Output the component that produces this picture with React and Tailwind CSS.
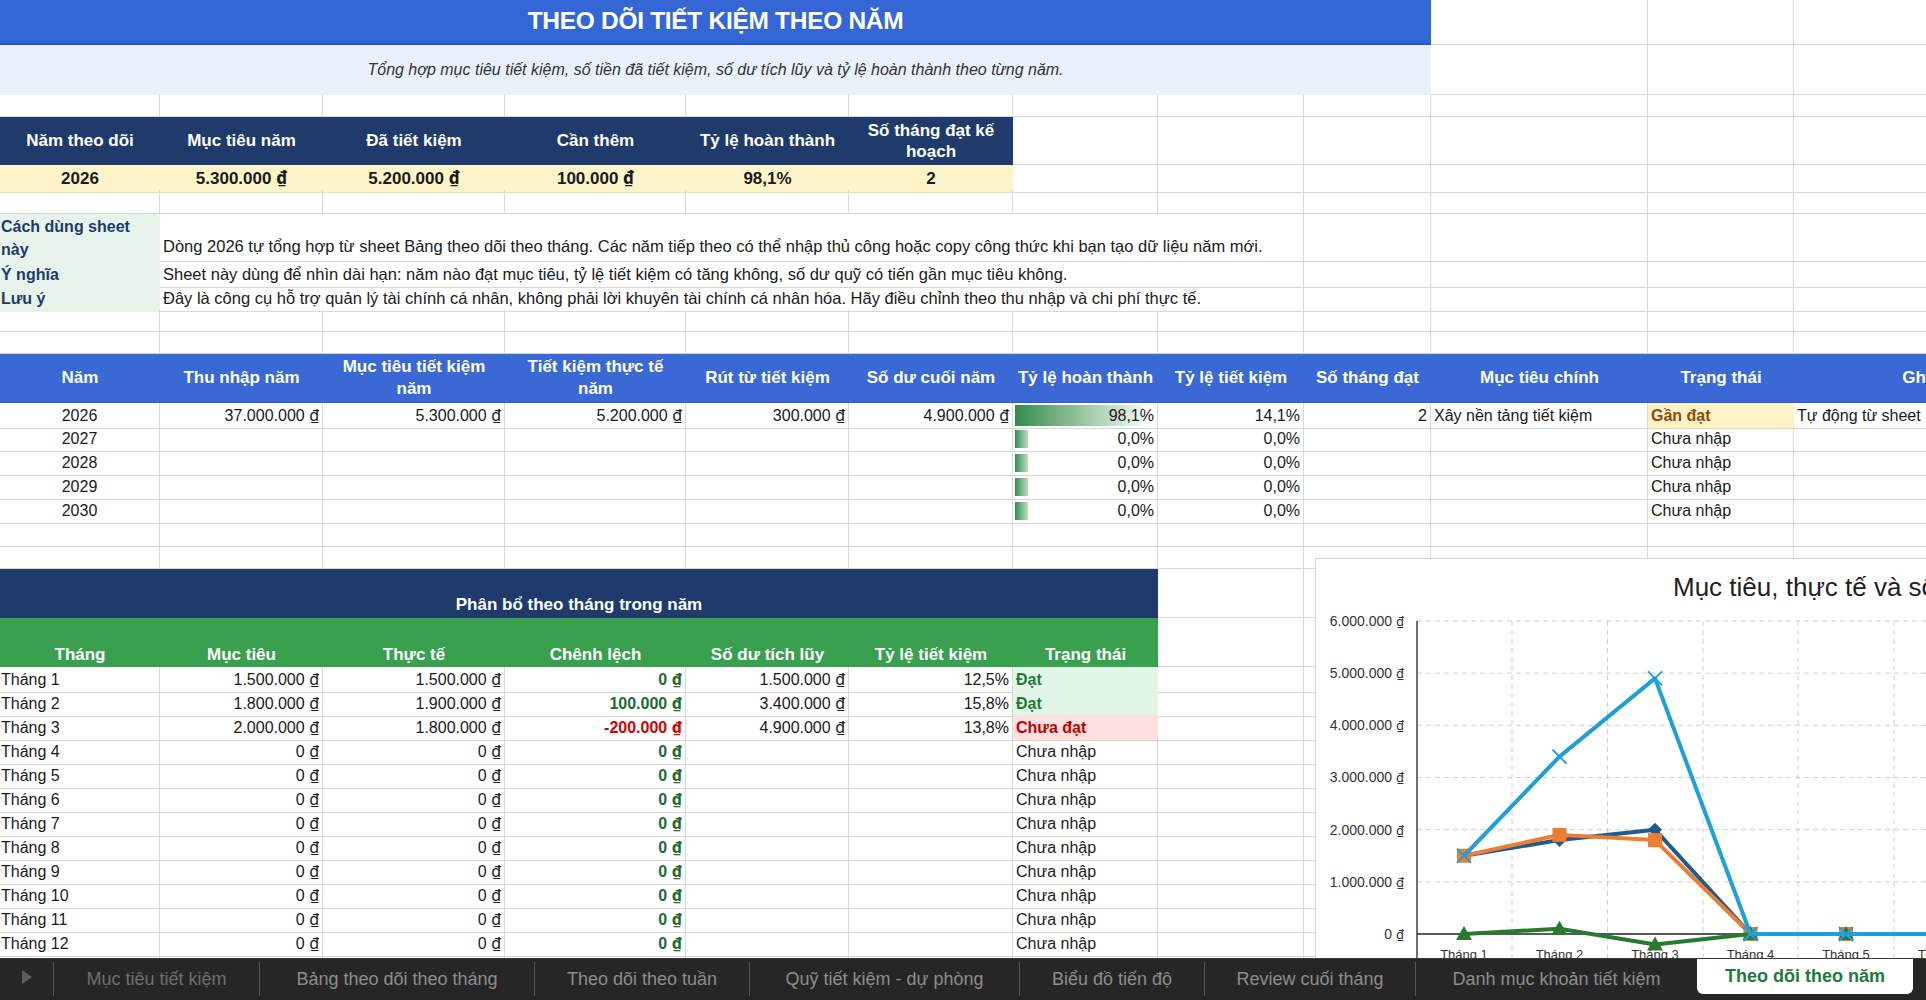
import React from "react";

const COLS =
  "grid grid-cols-[160px_163px_182px_181px_163px_164px_145px_146px_127px_217px_146px_280px]";
const LINE = "border-r border-b border-[#d9d9d9]";

function Cell({ span = "", cls = "", line = true, children }) {
  return (
    <div className={`${span} ${line ? LINE : ""} ${cls} relative flex min-w-0 whitespace-nowrap`}>
      {children}
    </div>
  );
}

function Row({ h, children }) {
  return <div className={`${COLS} ${h}`}>{children}</div>;
}

const blanks = (n) => Array.from({ length: n }).map((_, i) => <Cell key={"b" + i} />);

// the dong sign is tiny in Liberation Sans, so it gets its own font
const fmt = (s) => {
  if (!s || !s.includes("₫")) return s;
  const [n] = s.split(" ₫");
  return (
    <span>
      {n} <span className="font-['Noto_Sans',sans-serif]">₫</span>
    </span>
  );
};

const summaryHead = ["Năm theo dõi", "Mục tiêu năm", "Đã tiết kiệm", "Cần thêm", "Tỷ lệ hoàn thành"];
const summaryVals = ["2026", "5.300.000 ₫", "5.200.000 ₫", "100.000 ₫", "98,1%", "2"];

const notes = [
  ["Ý nghĩa", "Sheet này dùng để nhìn dài hạn: năm nào đạt mục tiêu, tỷ lệ tiết kiệm có tăng không, số dư quỹ có tiến gần mục tiêu không."],
  ["Lưu ý", "Đây là công cụ hỗ trợ quản lý tài chính cá nhân, không phải lời khuyên tài chính cá nhân hóa. Hãy điều chỉnh theo thu nhập và chi phí thực tế."],
];

const months = [
  ["Tháng 1", "1.500.000 ₫", "1.500.000 ₫", "0 ₫", "1.500.000 ₫", "12,5%", "Đạt"],
  ["Tháng 2", "1.800.000 ₫", "1.900.000 ₫", "100.000 ₫", "3.400.000 ₫", "15,8%", "Đạt"],
  ["Tháng 3", "2.000.000 ₫", "1.800.000 ₫", "-200.000 ₫", "4.900.000 ₫", "13,8%", "Chưa đạt"],
  ...[4, 5, 6, 7, 8, 9, 10, 11, 12].map((m) => ["Tháng " + m, "0 ₫", "0 ₫", "0 ₫", "", "", "Chưa nhập"]),
];

const years = [2027, 2028, 2029, 2030];

const tabs = [
  ["Mục tiêu tiết kiệm", "w-[206px]", "text-[#6f6f6f]"],
  ["Bảng theo dõi theo tháng", "w-[275px]", "text-[#8d8d8d]"],
  ["Theo dõi theo tuần", "w-[215px]", "text-[#8d8d8d]"],
  ["Quỹ tiết kiệm - dự phòng", "w-[270px]", "text-[#8d8d8d]"],
  ["Biểu đồ tiến độ", "w-[185px]", "text-[#8d8d8d]"],
  ["Review cuối tháng", "w-[211px]", "text-[#8d8d8d]"],
  ["Danh mục khoản tiết kiệm", "w-[282px]", "text-[#8d8d8d]"],
];

// chart geometry, relative to the chart box
const toY = (v) => 375 - v * 52.17;
const xs = [148, 243.5, 339, 434.5, 530, 625.5, 721];
const seriesData = {
  target: [1.5, 1.8, 2.0, 0, 0, 0, 0],
  actual: [1.5, 1.9, 1.8, 0, 0, 0, 0],
  diff: [0, 0.1, -0.2, 0, 0, 0, 0],
  balance: [1.5, 3.4, 4.9, 0, 0, 0, 0],
};
const pts = (arr) => arr.map((v, i) => `${xs[i]},${toY(v)}`).join(" ");

function Chart() {
  return (
    <div className="absolute left-[1315px] top-[558px] w-[700px] h-[460px] bg-white border border-[#d6d6d6]">
      <svg width="700" height="460" className="block">
        <text x="357" y="37" fontSize="26" fill="#1f1f1f" fontFamily="Liberation Sans, Arial, sans-serif">
          Mục tiêu, thực tế và số dư tích lũy
        </text>
        {[1, 2, 3, 4, 5, 6].map((t) => (
          <line key={"h" + t} x1="101" x2="700" y1={toY(t)} y2={toY(t)} stroke="#cfcfcf" strokeDasharray="5 4" />
        ))}
        {[196, 291.5, 387, 482, 578, 673].map((x) => (
          <line key={"v" + x} x1={x} x2={x} y1={toY(6)} y2="410" stroke="#cfcfcf" strokeDasharray="5 4" />
        ))}
        <line x1="101" x2="101" y1={toY(6)} y2="410" stroke="#222" strokeWidth="1.3" />
        <line x1="101" x2="700" y1={toY(0)} y2={toY(0)} stroke="#222" strokeWidth="1.3" />
        {[0, 1, 2, 3, 4, 5, 6].map((t) => (
          <text
            key={"yl" + t}
            x="88"
            y={toY(t) + 5}
            textAnchor="end"
            fontSize="14"
            fill="#333"
            fontFamily="Liberation Sans, Arial, sans-serif"
          >
            {t === 0 ? "0 " : `${t}.000.000 `}
            <tspan fontFamily="Noto Sans, sans-serif" fontSize="13">₫</tspan>
          </text>
        ))}
        {xs.map((x, i) => (
          <text
            key={"xl" + i}
            x={x}
            y="400"
            textAnchor="middle"
            fontSize="13"
            fill="#333"
            fontFamily="Liberation Sans, Arial, sans-serif"
          >
            {"Tháng " + (i + 1)}
          </text>
        ))}

        {/* Mục tiêu */}
        <polyline points={pts(seriesData.target)} fill="none" stroke="#1f5c8c" strokeWidth="4" strokeLinejoin="round" />
        {seriesData.target.map((v, i) => {
          const x = xs[i];
          const y = toY(v);
          return <path key={"d" + i} d={`M${x} ${y - 7} L${x + 7} ${y} L${x} ${y + 7} L${x - 7} ${y} Z`} fill="#1f5c8c" />;
        })}

        {/* Thực tế */}
        <polyline points={pts(seriesData.actual)} fill="none" stroke="#ed7d31" strokeWidth="4" strokeLinejoin="round" />
        {seriesData.actual.map((v, i) => (
          <rect key={"s" + i} x={xs[i] - 7} y={toY(v) - 7} width="14" height="14" fill="#ed7d31" />
        ))}

        {/* Chênh lệch */}
        <polyline points={pts(seriesData.diff)} fill="none" stroke="#2a7a2e" strokeWidth="4" strokeLinejoin="round" />
        {seriesData.diff.map((v, i) => {
          const x = xs[i];
          const y = toY(v);
          return <path key={"t" + i} d={`M${x} ${y - 8} L${x + 8} ${y + 6} L${x - 8} ${y + 6} Z`} fill="#2a7a2e" />;
        })}

        {/* Số dư tích lũy */}
        <polyline points={pts(seriesData.balance)} fill="none" stroke="#1fa0da" strokeWidth="4" strokeLinejoin="round" />
        {seriesData.balance.map((v, i) => {
          const x = xs[i];
          const y = toY(v);
          return (
            <g key={"x" + i} stroke="#1fa0da" strokeWidth="2">
              <line x1={x - 7} y1={y - 7} x2={x + 7} y2={y + 7} />
              <line x1={x - 7} y1={y + 7} x2={x + 7} y2={y - 7} />
            </g>
          );
        })}
      </svg>
    </div>
  );
}

export default function App() {
  const num = "justify-end items-center pr-[3px]";
  return (
    <div className="w-[1926px] h-[1000px] overflow-hidden bg-white text-[16px] text-[#1a1a1a] font-['Liberation_Sans',Arial,sans-serif] flex flex-col">
      <div className="relative h-[958px] overflow-hidden">
        {/* Title */}
        <Row h="h-[45px]">
          <Cell span="col-span-9" line={false} cls="bg-[#3566d5] border-b-2 border-[#2b57c4] justify-center items-center">
            <span className="text-white font-bold text-[24.5px] tracking-[-0.3px]">THEO DÕI TIẾT KIỆM THEO NĂM</span>
          </Cell>
          {blanks(3)}
        </Row>
        <Row h="h-[50px]">
          <Cell span="col-span-9" line={false} cls="bg-[#e9f1fd] justify-center items-center">
            <span className="italic text-[16px] text-[#333]">
              Tổng hợp mục tiêu tiết kiệm, số tiền đã tiết kiệm, số dư tích lũy và tỷ lệ hoàn thành theo từng năm.
            </span>
          </Cell>
          {blanks(3)}
        </Row>
        <Row h="h-[22px]">{blanks(12)}</Row>

        {/* Summary */}
        <Row h="h-[48px]">
          {summaryHead.map((t) => (
            <Cell key={t} line={false} cls="bg-[#1e3b6c] justify-center items-center text-white font-bold text-[17px]">
              {t}
            </Cell>
          ))}
          <Cell line={false} cls="bg-[#1e3b6c] justify-center items-center text-white font-bold text-[17px] text-center leading-[21px]">
            Số tháng đạt kế
            <br />
            hoạch
          </Cell>
          {blanks(6)}
        </Row>
        <Row h="h-[25px]">
          {summaryVals.map((t) => (
            <Cell key={t} line={false} cls="bg-[#fef4c9] border-b border-[#e8dfb5] justify-center items-center font-bold text-[17px]">
              {fmt(t)}
            </Cell>
          ))}
          {blanks(6)}
        </Row>
        <Row h="h-[24px]">{blanks(12)}</Row>

        {/* Notes */}
        <Row h="h-[48px]">
          <Cell line={false} cls="bg-[#e7f4ec] flex-col justify-end pl-[1px] pb-[1px] text-[#1e3b6c] font-bold leading-[23px]">
            <span>Cách dùng sheet</span>
            <span>này</span>
          </Cell>
          <Cell span="col-span-7" cls="items-end pl-[3px] pb-[2px] text-[16.5px]">
            Dòng 2026 tự tổng hợp từ sheet Bảng theo dõi theo tháng. Các năm tiếp theo có thể nhập thủ công hoặc copy công thức khi bạn tạo dữ liệu năm mới.
          </Cell>
          {blanks(4)}
        </Row>
        {notes.map(([k, v]) => (
          <Row key={k} h="h-[24px]">
            <Cell line={false} cls="bg-[#e7f4ec] items-center pl-[1px] text-[#1e3b6c] font-bold">
              {k}
            </Cell>
            <Cell span="col-span-7" cls="items-center pl-[3px] text-[16.5px]">
              {v}
            </Cell>
            {blanks(4)}
          </Row>
        ))}
        <Row h="h-[22px]">{blanks(12)}</Row>
        <Row h="h-[22px]">{blanks(12)}</Row>

        {/* Yearly table */}
        <Row h="h-[49px]">
          {[
            ["Năm"],
            ["Thu nhập năm"],
            ["Mục tiêu tiết kiệm", "năm"],
            ["Tiết kiệm thực tế", "năm"],
            ["Rút từ tiết kiệm"],
            ["Số dư cuối năm"],
            ["Tỷ lệ hoàn thành"],
            ["Tỷ lệ tiết kiệm"],
            ["Số tháng đạt"],
            ["Mục tiêu chính"],
            ["Trạng thái"],
            ["Ghi chú"],
          ].map((lines) => (
            <Cell
              key={lines[0]}
              line={false}
              cls="bg-[#3a69d6] border-b border-[#2f5cc6] flex-col justify-center items-center text-white font-bold text-[17px] leading-[22px]"
            >
              {lines.map((l) => (
                <span key={l}>{l}</span>
              ))}
            </Cell>
          ))}
        </Row>
        <Row h="h-[24px]">
          <Cell cls="justify-center items-center">2026</Cell>
          <Cell cls={num}>{fmt("37.000.000 ₫")}</Cell>
          <Cell cls={num}>{fmt("5.300.000 ₫")}</Cell>
          <Cell cls={num}>{fmt("5.200.000 ₫")}</Cell>
          <Cell cls={num}>{fmt("300.000 ₫")}</Cell>
          <Cell cls={num}>{fmt("4.900.000 ₫")}</Cell>
          <Cell cls={num}>
            <div className="absolute left-[2px] top-[2px] bottom-[2px] w-[127px] bg-linear-to-r from-[#2f8c4c] to-[#eef8f1]" />
            <span className="relative">98,1%</span>
          </Cell>
          <Cell cls={num}>14,1%</Cell>
          <Cell cls={num}>2</Cell>
          <Cell cls="items-center pl-[3px]">Xây nền tảng tiết kiệm</Cell>
          <Cell line={false} cls="bg-[#fdf3c6] border-b border-[#e8dfb5] items-center pl-[3px] text-[#8f4a0c] font-bold">
            Gần đạt
          </Cell>
          <Cell cls="items-center pl-[3px]">Tự động từ sheet Bảng theo dõi theo tháng</Cell>
        </Row>
        {years.map((y) => (
          <Row key={y} h="h-[24px]">
            <Cell cls="justify-center items-center">{y}</Cell>
            {blanks(5)}
            <Cell cls={num}>
              <div className="absolute left-[2px] top-[3px] bottom-[3px] w-[13px] bg-linear-to-r from-[#2f8c4c] to-[#b9dfc5]" />
              <span className="relative">0,0%</span>
            </Cell>
            <Cell cls={num}>0,0%</Cell>
            <Cell />
            <Cell />
            <Cell cls="items-center pl-[3px]">Chưa nhập</Cell>
            <Cell />
          </Row>
        ))}
        <Row h="h-[24px]">{blanks(12)}</Row>
        <Row h="h-[22px]">{blanks(12)}</Row>

        {/* Monthly table */}
        <Row h="h-[49px]">
          <Cell span="col-span-7" line={false} cls="bg-[#1e3b6c] justify-center items-end pb-[1px] text-white font-bold text-[17px]">
            Phân bổ theo tháng trong năm
          </Cell>
          {blanks(5)}
        </Row>
        <Row h="h-[49px]">
          {["Tháng", "Mục tiêu", "Thực tế", "Chênh lệch", "Số dư tích lũy", "Tỷ lệ tiết kiệm", "Trạng thái"].map((t) => (
            <Cell key={t} line={false} cls="bg-[#38a04f] justify-center items-end pb-0 text-white font-bold text-[17px]">
              {t}
            </Cell>
          ))}
          {blanks(5)}
        </Row>
        {months.map(([m, target, actual, diff, bal, rate, status]) => (
          <Row key={m} h="h-[24px]">
            <Cell cls="items-center pl-[1px]">{m}</Cell>
            <Cell cls={num}>{fmt(target)}</Cell>
            <Cell cls={num}>{fmt(actual)}</Cell>
            <Cell cls={`${num} font-bold ${diff.startsWith("-") ? "text-[#d40000]" : "text-[#1d6b30]"}`}>{fmt(diff)}</Cell>
            <Cell cls={num}>{fmt(bal)}</Cell>
            <Cell cls={num}>{rate}</Cell>
            {status === "Đạt" ? (
              <Cell line={false} cls="bg-[#e1f6e6] border-b border-[#d0e9d6] items-center pl-[3px] text-[#1f7a3a] font-bold">
                Đạt
              </Cell>
            ) : status === "Chưa đạt" ? (
              <Cell line={false} cls="bg-[#fde1e1] border-b border-[#f0cccc] items-center pl-[3px] text-[#c00000] font-bold">
                Chưa đạt
              </Cell>
            ) : (
              <Cell cls="items-center pl-[3px]">Chưa nhập</Cell>
            )}
            {blanks(5)}
          </Row>
        ))}
        <Row h="h-[24px]">{blanks(12)}</Row>

        <Chart />
      </div>

      {/* Sheet tabs */}
      <div className="h-[42px] bg-[#262626] border-t border-[#3a3a3a] flex items-start">
        <div className="w-[53px] h-[36px] flex items-center justify-center">
          <svg width="12" height="16" viewBox="0 0 12 16">
            <path d="M1 1 L11 8 L1 15 Z" fill="#5c5c5c" />
          </svg>
        </div>
        {tabs.map(([t, w, c]) => (
          <div key={t} className={`${w} h-[34px] mt-[3px] border-l border-[#555] flex items-center justify-center text-[18px] ${c}`}>
            {t}
          </div>
        ))}
        <div className="w-[216px] h-[35px] bg-white rounded-b-[6px] flex items-center justify-center text-[18px] font-bold text-[#1f7a3e]">
          Theo dõi theo năm
        </div>
      </div>
    </div>
  );
}
